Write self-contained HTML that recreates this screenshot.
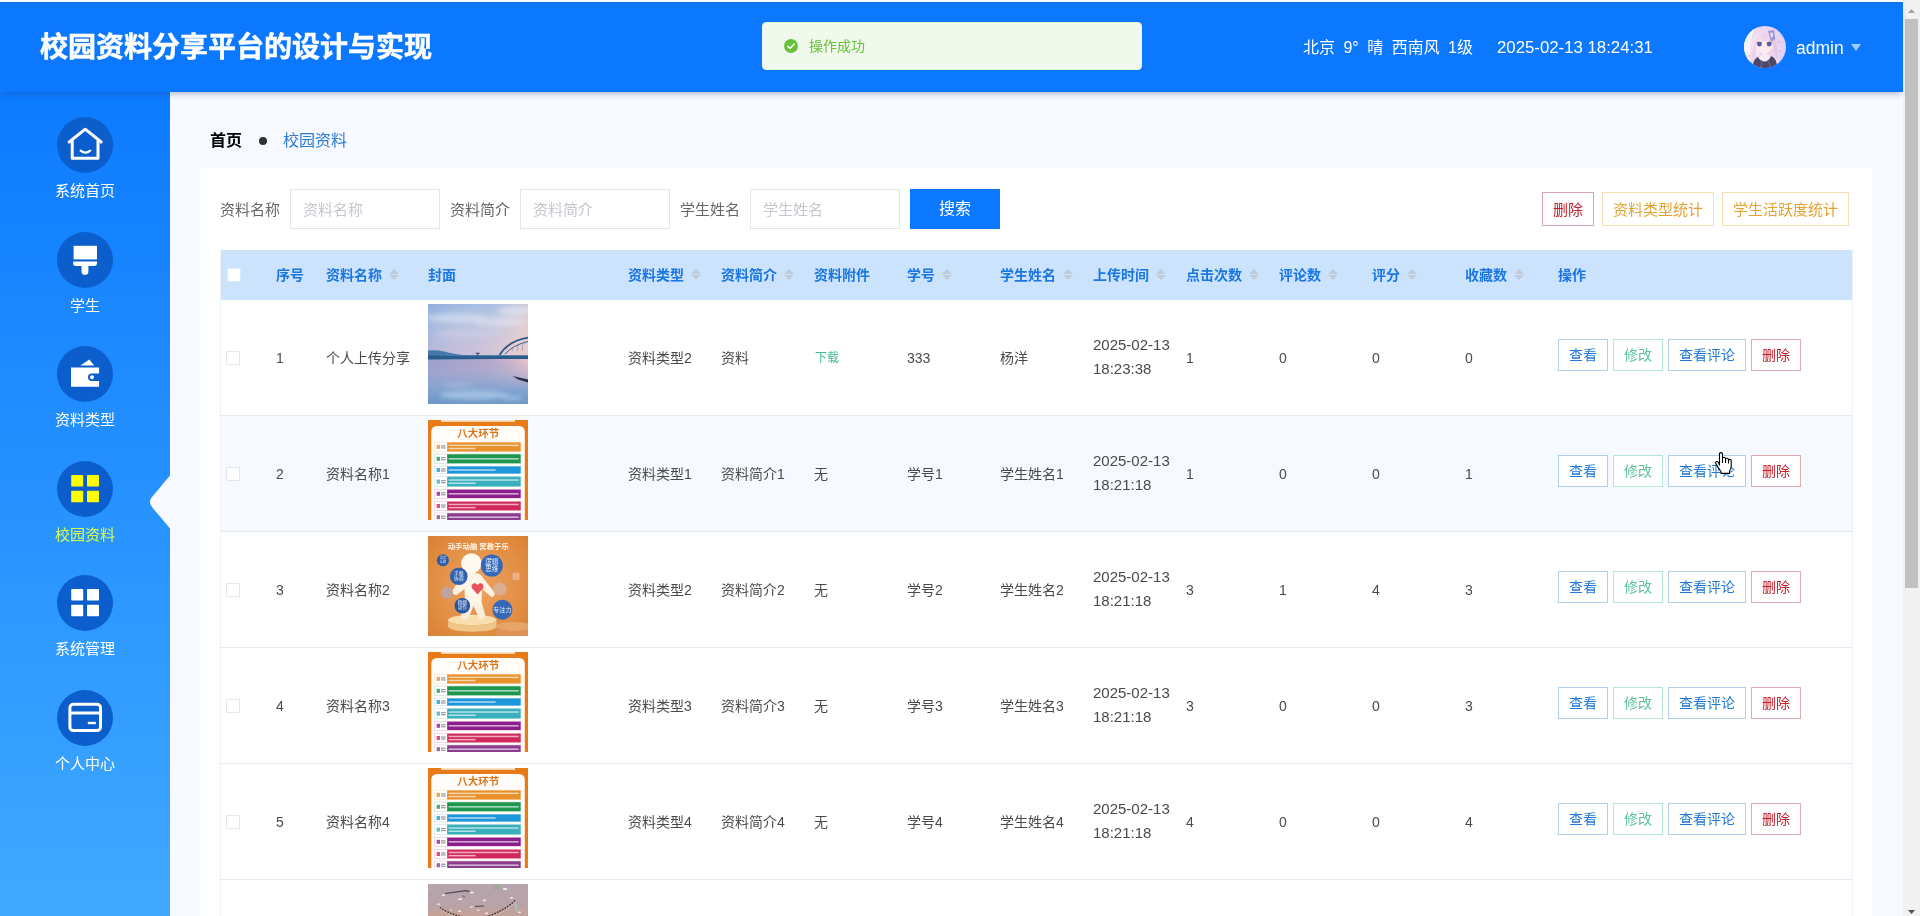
<!DOCTYPE html>
<html lang="zh-CN">
<head>
<meta charset="utf-8">
<title>校园资料分享平台的设计与实现</title>
<style>
*{box-sizing:border-box;margin:0;padding:0}
html,body{width:1920px;height:916px;overflow:hidden;background:#fff}
body{position:relative;opacity:.999;font-family:"Liberation Sans","Noto Sans CJK SC",sans-serif;font-size:14px;color:#4a4a4a}
.abs{position:absolute}
/* header */
#hdr{left:0;top:2px;width:1903px;height:90px;background:#0b78ff;box-shadow:0 4px 6px -2px rgba(40,60,120,.32);z-index:5}
#hdr:before{content:"";position:absolute;left:0;top:0;width:100%;height:1px;background:#1b6fdb}
#title{left:40px;top:26px;font-size:28px;font-weight:bold;-webkit-text-stroke:0.5px #fff;color:#fff;line-height:40px;letter-spacing:0;white-space:nowrap}
#toast{left:762px;top:20px;width:380px;height:48px;background:#f0f9eb;border:1px solid #e1f3d8;border-radius:4px}
#toast svg{position:absolute;left:21px;top:16px}
#toast span{position:absolute;left:46px;top:14px;font-size:14px;line-height:18px;color:#67c23a}
#wx{left:1303px;top:34px;font-size:16px;line-height:24px;color:#fff;white-space:nowrap;word-spacing:4px}
#tm{left:1497px;top:34px;font-size:16.8px;line-height:24px;color:#fff;white-space:nowrap}
#ava{left:1744px;top:24px;width:42px;height:42px;border-radius:50%;overflow:hidden}
#adm{left:1796px;top:33.5px;font-size:17.5px;line-height:24px;color:#fff}
#caret{left:1851px;top:42px;width:0;height:0;border-left:5px solid transparent;border-right:5px solid transparent;border-top:7px solid #9dccff}
/* sidebar */
#side{left:0;top:92px;width:170px;height:824px;background:linear-gradient(180deg,#0d7bff 0%,#2490ff 45%,#40a9ff 100%)}
.mi{position:absolute;left:0;width:170px;height:114px;text-align:center}
.mi .c{position:absolute;left:57px;top:0;width:56px;height:56px;border-radius:50%;background:#0b5ecb}
.mi .c svg{position:absolute;left:0;top:0}
.mi .t{position:absolute;left:0;width:170px;top:63px;font-size:15px;line-height:22px;color:#fff}
.mi.on .t{color:#dcff55}
#notch{left:148px;top:382px}
/* scrollbar */
#sb{left:1903px;top:0;width:17px;height:916px;background:#f1f1f1}
#sb .th{position:absolute;left:2px;top:19px;width:13px;height:569px;background:#c1c1c1}
/* main */
#main{left:170px;top:92px;width:1733px;height:824px;background:#f6f9ff}
#bc{left:210px;top:129px;font-size:16px;line-height:24px;white-space:nowrap}
#bc b{color:#000}
#bc .d{display:inline-block;width:8px;height:8px;border-radius:50%;background:#303133;margin:0 16px 1px 17px;vertical-align:middle}
#bc .l{color:#2b7bd3}
#card{left:200px;top:168px;width:1672px;height:748px;background:#fff}
.lab{position:absolute;top:190px;height:40px;line-height:40px;font-size:15px;color:#666;white-space:nowrap}
.inp{position:absolute;top:189px;width:150px;height:40px;border:1px solid #e4e6ec;background:#fff;line-height:40px;padding-left:12px;font-size:15px;color:#c4c7ce;white-space:nowrap}
#sbtn{left:910px;top:189px;width:90px;height:40px;background:#0b78ff;color:#fff;font-size:16px;line-height:40px;text-align:center}
.tb{position:absolute;top:192px;height:34px;line-height:33.5px;border:1px solid;font-size:15px;padding:0 10px;background:#fff;white-space:nowrap}
.tb.r{color:#c4202a;border-color:#dba3ab}
.tb.o{color:#e3a233;border-color:#f7ddb1}
/* table */
#th{left:220px;top:250px;width:1632px;height:50px;background:#cce3fd}
#th span{position:absolute;top:0;line-height:50px;font-size:14px;font-weight:bold;color:#1a76e3;white-space:nowrap}
.so{position:absolute;top:18px;width:10px;height:14px}
.so:before,.so:after{content:"";position:absolute;left:0;border-left:5px solid transparent;border-right:5px solid transparent}
.so:before{top:0.5px;border-bottom:5px solid #c0cada}
.so:after{top:6.5px;border-top:5px solid #c0cada}
.cb{position:absolute;width:14px;height:14px;border:1px solid #e3e6ec;background:#fff;border-radius:1px}
.row{position:absolute;left:220px;width:1632px;height:116px;border-bottom:1px solid #e4e8f3;background:#fff}
.row.alt{background:#f6f9ff}
.row .x{position:absolute;top:47px;line-height:22px;font-size:14px;color:#4a4a4a;white-space:nowrap}
.row .x2{position:absolute;top:33px;line-height:24px;font-size:15px;color:#4a4a4a;white-space:nowrap}
.row .im{position:absolute;left:208px;top:4px;width:100px;height:100px;overflow:hidden}
.row .g{color:#3fbf8f}
.bt{position:absolute;top:39px;height:32px;line-height:30px;border:1px solid;font-size:14px;padding:0 10px;background:#fff;white-space:nowrap}
.bt.b{color:#1f78d8;border-color:#b0cfee}
.bt.g{color:#5dc39b;border-color:#b7e6d3}
.bt.r{color:#c4202a;border-color:#e2aab1}
#tbl-l{left:220px;top:250px;width:1px;height:666px;background:#eef1f8}
#tbl-r{left:1852px;top:250px;width:1px;height:666px;background:#eef1f8}
</style>
</head>
<body>
<div id="main" class="abs"></div>
<div id="card" class="abs"></div>

<!-- HEADER -->
<div id="hdr" class="abs">
  <div id="title" class="abs">校园资料分享平台的设计与实现</div>
  <div id="toast" class="abs">
    <svg width="14" height="14" viewBox="0 0 14 14"><circle cx="7" cy="7" r="7" fill="#67c23a"/><path d="M3.8 7.2 L6.1 9.4 L10.3 5.1" fill="none" stroke="#fff" stroke-width="1.5" stroke-linecap="round" stroke-linejoin="round"/></svg>
    <span>操作成功</span>
  </div>
  <div id="wx" class="abs">北京 9° 晴 西南风 1级</div>
  <div id="tm" class="abs">2025-02-13 18:24:31</div>
  <div id="ava" class="abs"><svg width="42" height="42" viewBox="0 0 42 42"><defs><radialGradient id="ag" cx=".4" cy=".45" r=".65"><stop offset="0" stop-color="#fbeaf3"/><stop offset=".55" stop-color="#ecd8f2"/><stop offset="1" stop-color="#d6d2f4"/></radialGradient><filter id="ab" x="-20%" y="-20%" width="140%" height="140%"><feGaussianBlur stdDeviation=".7"/></filter></defs><rect width="42" height="42" fill="url(#ag)"/><g filter="url(#ab)"><path d="M0 0 H12 Q4 14 7 42 H0 Z" fill="#f6f3fb"/><path d="M9 42 Q5 16 19 7 Q34 4 36 24 Q37 34 34 42 Z" fill="#efd3ec"/><path d="M12 30 Q10 18 18 10 Q14 22 16 32 Z" fill="#f8e6f4"/><path d="M30 12 Q35 22 33 34 Q30 24 28 14 Z" fill="#e2c6ea"/><path d="M24 5 l6 -1 l1.4 9 l-4.4 3 z" fill="#9d95d6"/><path d="M26 7 l2.6 -.4 l.6 4 l-2 1.2 z" fill="#e6e2f6"/><path d="M12.5 17 Q20 13 28.5 17 Q29.5 25 20.5 28.5 Q12 25 12.500 17Z" fill="#fdebee"/><ellipse cx="15.4" cy="18.6" rx="2.3" ry="2" fill="#5c5ab4"/><ellipse cx="25.2" cy="18.6" rx="2.3" ry="2" fill="#5c5ab4"/><path d="M12.8 17 q2.6 -1.6 5.2 0 M22.6 17 q2.6 -1.6 5.2 0" stroke="#3c3460" stroke-width=".9" fill="none"/><path d="M8 42 Q10 31 16 30 Q21 34 27 30 Q33 32 33 42 Z" fill="#4c4668"/><path d="M14 31 Q20 25.500 27 30.500 Q24 36 20 35.500 Q16 35 14 31Z" fill="#f3ecf3"/><path d="M17 34 q1.500 4 0 8 M24 34 q1 4 3 8" stroke="#6a6288" stroke-width="1.200" fill="none"/><circle cx="35" cy="16" r="1.300" fill="#e9b5d8"/><circle cx="36.500" cy="25" r="1.100" fill="#e9b5d8"/><circle cx="5" cy="30" r="1.100" fill="#d8c8ee"/></g></svg></div>
  <div id="adm" class="abs">admin</div>
  <div id="caret" class="abs"></div>
</div>

<!-- SIDEBAR -->
<div id="side" class="abs"><div class="mi" style="top:25.0px"><div class="c"><svg width="56" height="56" viewBox="0 0 56 56"><path d="M12.2 25 L28.2 12.2 L44.2 25" fill="none" stroke="#ffffff" stroke-width="3" stroke-linejoin="round" stroke-linecap="round"/><path d="M15.2 23.5 V41.2 H41 V23.5" fill="none" stroke="#ffffff" stroke-width="3" stroke-linejoin="round"/><path d="M23.6 33.6 q4.8 4.2 9.6 0" fill="none" stroke="#ffffff" stroke-width="2.2" stroke-linecap="round"/></svg></div><div class="t">系统首页</div></div>
<div class="mi" style="top:139.5px"><div class="c"><svg width="56" height="56" viewBox="0 0 56 56"><path d="M16.6 13.8 h23.4 v13.6 h-23.4 z" fill="#ffffff"/><path d="M16.6 29.4 h23.4 v1.6 q0 3 -3 3 h-5.6 v5.4 a3.45 3.45 0 0 1 -6.9 0 v-5.4 h-5.5 q-3 0 -3 -3 z" fill="#ffffff"/></svg></div><div class="t">学生</div></div>
<div class="mi" style="top:254.0px"><div class="c"><svg width="56" height="56" viewBox="0 0 56 56"><path d="M23.4 19.6 L32.3 13.4 L37.2 19.6 Z" fill="#ffffff"/><path d="M14 21.4 h28.1 v6.2 h-7.4 a3.7 3.7 0 0 0 0 7.4 h7.4 v5.8 h-28.1 z" fill="#ffffff"/><circle cx="35" cy="31.3" r="2" fill="#ffffff"/></svg></div><div class="t">资料类型</div></div>
<div class="mi on" style="top:368.5px"><div class="c"><svg width="56" height="56" viewBox="0 0 56 56"><rect x="14.2" y="14" width="12" height="11.5" rx="0.8" fill="#ffff00"/><rect x="30" y="14" width="12" height="11.5" rx="0.8" fill="#ffff00"/><rect x="14.2" y="29.8" width="12" height="11.5" rx="0.8" fill="#ffff00"/><rect x="30" y="29.8" width="12" height="11.5" rx="0.8" fill="#ffff00"/></svg></div><div class="t">校园资料</div></div>
<div class="mi" style="top:483.0px"><div class="c"><svg width="56" height="56" viewBox="0 0 56 56"><rect x="14.2" y="14" width="12" height="11.5" rx="0.8" fill="#ffffff"/><rect x="30" y="14" width="12" height="11.5" rx="0.8" fill="#ffffff"/><rect x="14.2" y="29.8" width="12" height="11.5" rx="0.8" fill="#ffffff"/><rect x="30" y="29.8" width="12" height="11.5" rx="0.8" fill="#ffffff"/></svg></div><div class="t">系统管理</div></div>
<div class="mi" style="top:597.5px"><div class="c"><svg width="56" height="56" viewBox="0 0 56 56"><rect x="12.9" y="14.3" width="30.6" height="26.3" rx="3.5" fill="none" stroke="#ffffff" stroke-width="3"/><path d="M12.9 23 h30.6" stroke="#ffffff" stroke-width="3"/><path d="M30.8 33 h8" stroke="#ffffff" stroke-width="2.4"/></svg></div><div class="t">个人中心</div></div>
<svg id="notch" class="abs" width="22" height="56" viewBox="0 0 22 56"><path d="M22 1.5 L9.5 16.5 C5.5 21 2 24.5 2 28 C2 31.5 5.5 35 9.5 39.5 L22 54.5 Z" fill="#f8faff"/></svg></div>

<!-- BREADCRUMB -->
<div id="bc" class="abs"><b>首页</b><span class="d"></span><span class="l">校园资料</span></div>

<!-- SEARCH -->
<div class="lab" style="left:220px">资料名称</div><div class="inp" style="left:290px">资料名称</div>
<div class="lab" style="left:450px">资料简介</div><div class="inp" style="left:520px">资料简介</div>
<div class="lab" style="left:680px">学生姓名</div><div class="inp" style="left:750px">学生姓名</div>
<div id="sbtn" class="abs">搜索</div>
<div class="tb r" style="left:1542px">删除</div>
<div class="tb o" style="left:1602px">资料类型统计</div>
<div class="tb o" style="left:1722px">学生活跃度统计</div>

<!-- TABLE -->
<div id="th" class="abs"><div class="cb" style="left:7px;top:18px;border-color:#deebfc"></div>
<span style="left:56px">序号</span>
<span style="left:106px">资料名称</span>
<i class="so" style="left:169px"></i>
<span style="left:208px">封面</span>
<span style="left:408px">资料类型</span>
<i class="so" style="left:471px"></i>
<span style="left:501px">资料简介</span>
<i class="so" style="left:564px"></i>
<span style="left:594px">资料附件</span>
<span style="left:687px">学号</span>
<i class="so" style="left:722px"></i>
<span style="left:780px">学生姓名</span>
<i class="so" style="left:843px"></i>
<span style="left:873px">上传时间</span>
<i class="so" style="left:936px"></i>
<span style="left:966px">点击次数</span>
<i class="so" style="left:1029px"></i>
<span style="left:1059px">评论数</span>
<i class="so" style="left:1108px"></i>
<span style="left:1152px">评分</span>
<i class="so" style="left:1187px"></i>
<span style="left:1245px">收藏数</span>
<i class="so" style="left:1294px"></i>
<span style="left:1338px">操作</span>
</div>
<div class="row" style="top:300px"><div class="cb" style="left:6px;top:51px"></div><div class="x" style="left:56px">1</div><div class="x" style="left:106px">个人上传分享</div><div class="im"><svg width="100" height="100" viewBox="0 0 100 100"><defs><linearGradient id="sky0" x1="0" y1="0" x2="0" y2="1"><stop offset="0" stop-color="#98b8e2"/><stop offset=".3" stop-color="#b4c4e2"/><stop offset=".7" stop-color="#c0bcda"/><stop offset="1" stop-color="#c6b6d2"/></linearGradient><linearGradient id="skx0" x1="0" y1="0" x2="1" y2="0.25"><stop offset="0" stop-color="#86a8da" stop-opacity=".55"/><stop offset=".55" stop-color="#cfcfe6" stop-opacity=".25"/><stop offset="1" stop-color="#f0d2cc" stop-opacity=".75"/></linearGradient><linearGradient id="wat0" x1="0" y1="0" x2="0" y2="1"><stop offset="0" stop-color="#a9a2cc"/><stop offset=".3" stop-color="#a4a8d0"/><stop offset=".65" stop-color="#86a4d0"/><stop offset="1" stop-color="#6c98c8"/></linearGradient><linearGradient id="wax0" x1="0" y1="0" x2="1" y2="0"><stop offset="0" stop-color="#8a9cd0" stop-opacity=".5"/><stop offset=".55" stop-color="#c8b0cc" stop-opacity=".3"/><stop offset="1" stop-color="#f0c8c8" stop-opacity=".95"/></linearGradient><linearGradient id="wfade0" x1="0" y1="0" x2="0" y2="1"><stop offset="0" stop-color="#fff" stop-opacity="1"/><stop offset="1" stop-color="#fff" stop-opacity="0"/></linearGradient><filter id="bl0" x="-20%" y="-50%" width="140%" height="200%"><feGaussianBlur stdDeviation="2.2"/></filter><mask id="wm0"><rect y="54" width="100" height="32" fill="url(#wfade0)"/></mask></defs><rect width="100" height="55" fill="url(#sky0)"/><rect width="100" height="55" fill="url(#skx0)"/><g filter="url(#bl0)"><ellipse cx="28" cy="14" rx="30" ry="4.5" fill="#dfe7f4" opacity=".55"/><ellipse cx="72" cy="18" rx="26" ry="5" fill="#e6e6f2" opacity=".45"/><ellipse cx="86" cy="7" rx="16" ry="5" fill="#e8eef8" opacity=".5"/><ellipse cx="40" cy="30" rx="34" ry="4" fill="#d2d0e6" opacity=".5"/></g><rect y="54" width="100" height="46" fill="url(#wat0)"/><rect y="54" width="100" height="46" fill="url(#wax0)" mask="url(#wm0)"/><path d="M0 46.5 Q8 45.5 16 47.5 T34 51 L100 51.5 V55 H0 Z" fill="#4578ac"/><path d="M0 51.2 Q30 52.6 60 52 L100 51.6 V55 H70 L0 55.6 Z" fill="#2a5c8c"/><path d="M71.5 51 Q80 37 100 33.6" fill="none" stroke="#2c5484" stroke-width="1.7"/><path d="M77 50 Q85 41 100 37.5" fill="none" stroke="#3a6090" stroke-width="1"/><path d="M84 47 L85 44 M89 47 L90 41 M94 47 L95 39" stroke="#5a7ca8" stroke-width=".5"/><rect x="47.8" y="48.8" width="3.8" height="1" fill="#27406a"/><rect x="49.3" y="48.8" width="0.9" height="3.2" fill="#27406a"/><path d="M84.5 72 L100 75.5 V78.5 L90 75.5 Z" fill="#2a3048"/><g filter="url(#bl0)"><ellipse cx="46" cy="91" rx="34" ry="4.5" fill="#b4d0ec" opacity=".65"/><ellipse cx="30" cy="81" rx="16" ry="2.5" fill="#b8cdea" opacity=".35"/><ellipse cx="84" cy="94" rx="10" ry="2.5" fill="#b4d0ec" opacity=".55"/></g></svg></div><div class="x" style="left:408px">资料类型2</div><div class="x" style="left:501px">资料</div><div class="x g" style="left:594px;font-size:12px;margin-left:1px">下载</div><div class="x" style="left:687px">333</div><div class="x" style="left:780px">杨洋</div><div class="x2" style="left:873px">2025-02-13<br>18:23:38</div><div class="x" style="left:966px">1</div><div class="x" style="left:1059px">0</div><div class="x" style="left:1152px">0</div><div class="x" style="left:1245px">0</div><div class="bt b" style="left:1338px">查看</div><div class="bt g" style="left:1393px">修改</div><div class="bt b" style="left:1448px">查看评论</div><div class="bt r" style="left:1531px">删除</div></div>
<div class="row alt" style="top:416px"><div class="cb" style="left:6px;top:51px"></div><div class="x" style="left:56px">2</div><div class="x" style="left:106px">资料名称1</div><div class="im"><svg width="100" height="100" viewBox="0 0 100 100"><rect width="100" height="100" fill="#e87a17"/><path d="M3.3 100 V11.5 a5.5 5.5 0 0 1 5.5 -5.5 H91.3 a5.5 5.5 0 0 1 5.5 5.5 V100 Z" fill="#fffcf9"/><rect x="13" y="0" width="74" height="1.8" fill="#fbe3c8"/><text x="50.3" y="17.3" text-anchor="middle" font-size="10.5" font-weight="bold" fill="#d9761e" font-family="Liberation Sans,Noto Sans CJK SC,sans-serif">八大环节</text><rect x="6" y="21.9" width="87.2" height="10.1" fill="#e8902a" opacity=".28"/><rect x="6.6" y="22.5" width="12.6" height="8.9" fill="#fff"/><rect x="19.2" y="22.5" width="73.4" height="8.9" fill="#e8902a"/><rect x="8.6" y="24.9" width="3.4" height="4" fill="#e8902a" opacity=".8"/><rect x="13" y="25.3" width="4.6" height="1.2" fill="#555" opacity=".6"/><rect x="13" y="27.3" width="4.6" height="1.2" fill="#555" opacity=".6"/><rect x="20.6" y="24.6" width="70" height="1.5" fill="#fff" opacity=".62"/><rect x="20.6" y="27.8" width="27" height="1.5" fill="#fff" opacity=".62"/><rect x="6" y="33.7" width="87.2" height="10.1" fill="#1e9650" opacity=".28"/><rect x="6.6" y="34.3" width="12.6" height="8.9" fill="#fff"/><rect x="19.2" y="34.3" width="73.4" height="8.9" fill="#1e9650"/><rect x="8.6" y="36.8" width="3.4" height="4" fill="#1e9650" opacity=".8"/><rect x="13" y="37.1" width="4.6" height="1.2" fill="#555" opacity=".6"/><rect x="13" y="39.1" width="4.6" height="1.2" fill="#555" opacity=".6"/><rect x="20.6" y="38.0" width="70" height="1.6" fill="#fff" opacity=".62"/><rect x="6" y="45.9" width="87.2" height="8.2" fill="#1e96dc" opacity=".28"/><rect x="6.6" y="46.5" width="12.6" height="7.0" fill="#fff"/><rect x="19.2" y="46.5" width="73.4" height="7.0" fill="#1e96dc"/><rect x="8.6" y="48.0" width="3.4" height="4" fill="#1e96dc" opacity=".8"/><rect x="13" y="48.4" width="4.6" height="1.2" fill="#555" opacity=".6"/><rect x="13" y="50.4" width="4.6" height="1.2" fill="#555" opacity=".6"/><rect x="20.6" y="49.2" width="47" height="1.6" fill="#fff" opacity=".62"/><rect x="6" y="56.1" width="87.2" height="10.9" fill="#3ab0bc" opacity=".28"/><rect x="6.6" y="56.7" width="12.6" height="9.7" fill="#fff"/><rect x="19.2" y="56.7" width="73.4" height="9.7" fill="#3ab0bc"/><rect x="8.6" y="59.6" width="3.4" height="4" fill="#3ab0bc" opacity=".8"/><rect x="13" y="60.0" width="4.6" height="1.2" fill="#555" opacity=".6"/><rect x="13" y="62.0" width="4.6" height="1.2" fill="#555" opacity=".6"/><rect x="20.6" y="59.3" width="70" height="1.5" fill="#fff" opacity=".62"/><rect x="20.6" y="62.5" width="27" height="1.5" fill="#fff" opacity=".62"/><rect x="6" y="69.1" width="87.2" height="9.5" fill="#8c1e8c" opacity=".28"/><rect x="6.6" y="69.7" width="12.6" height="8.3" fill="#fff"/><rect x="19.2" y="69.7" width="73.4" height="8.3" fill="#8c1e8c"/><rect x="8.6" y="71.8" width="3.4" height="4" fill="#8c1e8c" opacity=".8"/><rect x="13" y="72.2" width="4.6" height="1.2" fill="#555" opacity=".6"/><rect x="13" y="74.2" width="4.6" height="1.2" fill="#555" opacity=".6"/><rect x="20.6" y="73.0" width="70" height="1.6" fill="#fff" opacity=".62"/><rect x="6" y="81.1" width="87.2" height="9.8" fill="#d2285f" opacity=".28"/><rect x="6.6" y="81.7" width="12.6" height="8.6" fill="#fff"/><rect x="19.2" y="81.7" width="73.4" height="8.6" fill="#d2285f"/><rect x="8.6" y="84.0" width="3.4" height="4" fill="#d2285f" opacity=".8"/><rect x="13" y="84.4" width="4.6" height="1.2" fill="#555" opacity=".6"/><rect x="13" y="86.4" width="4.6" height="1.2" fill="#555" opacity=".6"/><rect x="20.6" y="83.7" width="70" height="1.5" fill="#fff" opacity=".62"/><rect x="20.6" y="86.9" width="27" height="1.5" fill="#fff" opacity=".62"/><rect x="6" y="92.7" width="87.2" height="8.9" fill="#8c3c8c" opacity=".28"/><rect x="6.6" y="93.3" width="12.6" height="7.7" fill="#fff"/><rect x="19.2" y="93.3" width="73.4" height="7.7" fill="#8c3c8c"/><rect x="8.6" y="95.2" width="3.4" height="4" fill="#8c3c8c" opacity=".8"/><rect x="13" y="95.6" width="4.6" height="1.2" fill="#555" opacity=".6"/><rect x="13" y="97.6" width="4.6" height="1.2" fill="#555" opacity=".6"/><rect x="20.6" y="96.4" width="70" height="1.6" fill="#fff" opacity=".62"/></svg></div><div class="x" style="left:408px">资料类型1</div><div class="x" style="left:501px">资料简介1</div><div class="x" style="left:594px">无</div><div class="x" style="left:687px">学号1</div><div class="x" style="left:780px">学生姓名1</div><div class="x2" style="left:873px">2025-02-13<br>18:21:18</div><div class="x" style="left:966px">1</div><div class="x" style="left:1059px">0</div><div class="x" style="left:1152px">0</div><div class="x" style="left:1245px">1</div><div class="bt b" style="left:1338px">查看</div><div class="bt g" style="left:1393px">修改</div><div class="bt b" style="left:1448px">查看评论</div><div class="bt r" style="left:1531px">删除</div></div>
<div class="row" style="top:532px"><div class="cb" style="left:6px;top:51px"></div><div class="x" style="left:56px">3</div><div class="x" style="left:106px">资料名称2</div><div class="im"><svg width="100" height="100" viewBox="0 0 100 100"><defs><radialGradient id="tbg2" cx=".5" cy=".5" r=".72"><stop offset="0" stop-color="#eda365"/><stop offset=".6" stop-color="#e38f45"/><stop offset="1" stop-color="#d98032"/></radialGradient><radialGradient id="tfig2" cx=".5" cy=".35" r=".7"><stop offset="0" stop-color="#fffaf0"/><stop offset="1" stop-color="#f9ead2"/></radialGradient></defs><rect width="100" height="100" fill="url(#tbg2)"/><text x="50.3" y="13.2" text-anchor="middle" font-size="7.4" font-weight="bold" fill="#fff6ea" font-family="Liberation Sans,Noto Sans CJK SC,sans-serif">动手动脑 寓教于乐</text><ellipse cx="86" cy="90.5" rx="18" ry="4.5" fill="#e6a468"/><path d="M68 90.5 v10 h36 v-10 a18 4.5 0 0 1 -36 0z" fill="#dc9354"/><ellipse cx="44.3" cy="84" rx="24.2" ry="5.2" fill="#f9dfae"/><path d="M20.1 84 v6.5 a24.2 5.2 0 0 0 48.4 0 v-6.5 a24.2 5.2 0 0 1 -48.4 0z" fill="#efc68a"/><path d="M34.5 38 Q43 35 52 38 L66.5 56.5 Q67.5 60.5 63.5 61 L54 53 L53.5 66 L57.5 80 Q57 84 51.5 83 L45.5 70 L40 83 Q34 85 32.5 81 L37 66 L36.5 53 L28.5 59 Q24 58.5 24.5 54.5 Z" fill="url(#tfig2)"/><circle cx="43.4" cy="27.4" r="10.2" fill="#fffaf0"/><path d="M49.6 49.2 c-2.2 -4.2 -7.8 -1.2 -5.4 3.2 l5.4 6.2 5.4 -6.2 c2.4 -4.4 -3.2 -7.4 -5.4 -3.2z" fill="#e8525f"/><circle cx="19" cy="56.7" r="6" fill="#b9a4ae" opacity=".9"/><circle cx="72" cy="53.2" r="6.5" fill="#dcae90"/><rect x="84.5" y="36.5" width="7" height="7.5" rx="1.5" fill="#ecb285"/><circle cx="14.9" cy="24.3" r="6" fill="#2d5aa4"/><circle cx="30.8" cy="40.2" r="8.8" fill="#3162ae"/><circle cx="63.8" cy="29.6" r="11" fill="#3568b6"/><circle cx="34.3" cy="69.7" r="7.8" fill="#2b57a2"/><circle cx="74.4" cy="73.8" r="10" fill="#3568b6"/><text x="63.8" y="27.799999999999997" text-anchor="middle" font-size="6.6" fill="#e8eefa" font-family="Liberation Sans,Noto Sans CJK SC,sans-serif">逻辑</text><text x="63.8" y="34.8" text-anchor="middle" font-size="6.6" fill="#e8eefa" font-family="Liberation Sans,Noto Sans CJK SC,sans-serif">思维</text><text x="30.8" y="39.0" text-anchor="middle" font-size="4.8" fill="#e8eefa" font-family="Liberation Sans,Noto Sans CJK SC,sans-serif">手眼</text><text x="30.8" y="44.199999999999996" text-anchor="middle" font-size="4.8" fill="#e8eefa" font-family="Liberation Sans,Noto Sans CJK SC,sans-serif">协调</text><text x="34.3" y="68.4" text-anchor="middle" font-size="4.6" fill="#e8eefa" font-family="Liberation Sans,Noto Sans CJK SC,sans-serif">精细</text><text x="34.3" y="73.39999999999999" text-anchor="middle" font-size="4.6" fill="#e8eefa" font-family="Liberation Sans,Noto Sans CJK SC,sans-serif">动作</text><text x="14.9" y="23.2" text-anchor="middle" font-size="3.2" fill="#e8eefa" font-family="Liberation Sans,Noto Sans CJK SC,sans-serif">语言</text><text x="14.9" y="26.8" text-anchor="middle" font-size="3.2" fill="#e8eefa" font-family="Liberation Sans,Noto Sans CJK SC,sans-serif">认知</text><text x="74.4" y="76.4" text-anchor="middle" font-size="6.2" fill="#e8eefa" font-family="Liberation Sans,Noto Sans CJK SC,sans-serif">专注力</text></svg></div><div class="x" style="left:408px">资料类型2</div><div class="x" style="left:501px">资料简介2</div><div class="x" style="left:594px">无</div><div class="x" style="left:687px">学号2</div><div class="x" style="left:780px">学生姓名2</div><div class="x2" style="left:873px">2025-02-13<br>18:21:18</div><div class="x" style="left:966px">3</div><div class="x" style="left:1059px">1</div><div class="x" style="left:1152px">4</div><div class="x" style="left:1245px">3</div><div class="bt b" style="left:1338px">查看</div><div class="bt g" style="left:1393px">修改</div><div class="bt b" style="left:1448px">查看评论</div><div class="bt r" style="left:1531px">删除</div></div>
<div class="row" style="top:648px"><div class="cb" style="left:6px;top:51px"></div><div class="x" style="left:56px">4</div><div class="x" style="left:106px">资料名称3</div><div class="im"><svg width="100" height="100" viewBox="0 0 100 100"><rect width="100" height="100" fill="#e87a17"/><path d="M3.3 100 V11.5 a5.5 5.5 0 0 1 5.5 -5.5 H91.3 a5.5 5.5 0 0 1 5.5 5.5 V100 Z" fill="#fffcf9"/><rect x="13" y="0" width="74" height="1.8" fill="#fbe3c8"/><text x="50.3" y="17.3" text-anchor="middle" font-size="10.5" font-weight="bold" fill="#d9761e" font-family="Liberation Sans,Noto Sans CJK SC,sans-serif">八大环节</text><rect x="6" y="21.9" width="87.2" height="10.1" fill="#e8902a" opacity=".28"/><rect x="6.6" y="22.5" width="12.6" height="8.9" fill="#fff"/><rect x="19.2" y="22.5" width="73.4" height="8.9" fill="#e8902a"/><rect x="8.6" y="24.9" width="3.4" height="4" fill="#e8902a" opacity=".8"/><rect x="13" y="25.3" width="4.6" height="1.2" fill="#555" opacity=".6"/><rect x="13" y="27.3" width="4.6" height="1.2" fill="#555" opacity=".6"/><rect x="20.6" y="24.6" width="70" height="1.5" fill="#fff" opacity=".62"/><rect x="20.6" y="27.8" width="27" height="1.5" fill="#fff" opacity=".62"/><rect x="6" y="33.7" width="87.2" height="10.1" fill="#1e9650" opacity=".28"/><rect x="6.6" y="34.3" width="12.6" height="8.9" fill="#fff"/><rect x="19.2" y="34.3" width="73.4" height="8.9" fill="#1e9650"/><rect x="8.6" y="36.8" width="3.4" height="4" fill="#1e9650" opacity=".8"/><rect x="13" y="37.1" width="4.6" height="1.2" fill="#555" opacity=".6"/><rect x="13" y="39.1" width="4.6" height="1.2" fill="#555" opacity=".6"/><rect x="20.6" y="38.0" width="70" height="1.6" fill="#fff" opacity=".62"/><rect x="6" y="45.9" width="87.2" height="8.2" fill="#1e96dc" opacity=".28"/><rect x="6.6" y="46.5" width="12.6" height="7.0" fill="#fff"/><rect x="19.2" y="46.5" width="73.4" height="7.0" fill="#1e96dc"/><rect x="8.6" y="48.0" width="3.4" height="4" fill="#1e96dc" opacity=".8"/><rect x="13" y="48.4" width="4.6" height="1.2" fill="#555" opacity=".6"/><rect x="13" y="50.4" width="4.6" height="1.2" fill="#555" opacity=".6"/><rect x="20.6" y="49.2" width="47" height="1.6" fill="#fff" opacity=".62"/><rect x="6" y="56.1" width="87.2" height="10.9" fill="#3ab0bc" opacity=".28"/><rect x="6.6" y="56.7" width="12.6" height="9.7" fill="#fff"/><rect x="19.2" y="56.7" width="73.4" height="9.7" fill="#3ab0bc"/><rect x="8.6" y="59.6" width="3.4" height="4" fill="#3ab0bc" opacity=".8"/><rect x="13" y="60.0" width="4.6" height="1.2" fill="#555" opacity=".6"/><rect x="13" y="62.0" width="4.6" height="1.2" fill="#555" opacity=".6"/><rect x="20.6" y="59.3" width="70" height="1.5" fill="#fff" opacity=".62"/><rect x="20.6" y="62.5" width="27" height="1.5" fill="#fff" opacity=".62"/><rect x="6" y="69.1" width="87.2" height="9.5" fill="#8c1e8c" opacity=".28"/><rect x="6.6" y="69.7" width="12.6" height="8.3" fill="#fff"/><rect x="19.2" y="69.7" width="73.4" height="8.3" fill="#8c1e8c"/><rect x="8.6" y="71.8" width="3.4" height="4" fill="#8c1e8c" opacity=".8"/><rect x="13" y="72.2" width="4.6" height="1.2" fill="#555" opacity=".6"/><rect x="13" y="74.2" width="4.6" height="1.2" fill="#555" opacity=".6"/><rect x="20.6" y="73.0" width="70" height="1.6" fill="#fff" opacity=".62"/><rect x="6" y="81.1" width="87.2" height="9.8" fill="#d2285f" opacity=".28"/><rect x="6.6" y="81.7" width="12.6" height="8.6" fill="#fff"/><rect x="19.2" y="81.7" width="73.4" height="8.6" fill="#d2285f"/><rect x="8.6" y="84.0" width="3.4" height="4" fill="#d2285f" opacity=".8"/><rect x="13" y="84.4" width="4.6" height="1.2" fill="#555" opacity=".6"/><rect x="13" y="86.4" width="4.6" height="1.2" fill="#555" opacity=".6"/><rect x="20.6" y="83.7" width="70" height="1.5" fill="#fff" opacity=".62"/><rect x="20.6" y="86.9" width="27" height="1.5" fill="#fff" opacity=".62"/><rect x="6" y="92.7" width="87.2" height="8.9" fill="#8c3c8c" opacity=".28"/><rect x="6.6" y="93.3" width="12.6" height="7.7" fill="#fff"/><rect x="19.2" y="93.3" width="73.4" height="7.7" fill="#8c3c8c"/><rect x="8.6" y="95.2" width="3.4" height="4" fill="#8c3c8c" opacity=".8"/><rect x="13" y="95.6" width="4.6" height="1.2" fill="#555" opacity=".6"/><rect x="13" y="97.6" width="4.6" height="1.2" fill="#555" opacity=".6"/><rect x="20.6" y="96.4" width="70" height="1.6" fill="#fff" opacity=".62"/></svg></div><div class="x" style="left:408px">资料类型3</div><div class="x" style="left:501px">资料简介3</div><div class="x" style="left:594px">无</div><div class="x" style="left:687px">学号3</div><div class="x" style="left:780px">学生姓名3</div><div class="x2" style="left:873px">2025-02-13<br>18:21:18</div><div class="x" style="left:966px">3</div><div class="x" style="left:1059px">0</div><div class="x" style="left:1152px">0</div><div class="x" style="left:1245px">3</div><div class="bt b" style="left:1338px">查看</div><div class="bt g" style="left:1393px">修改</div><div class="bt b" style="left:1448px">查看评论</div><div class="bt r" style="left:1531px">删除</div></div>
<div class="row" style="top:764px"><div class="cb" style="left:6px;top:51px"></div><div class="x" style="left:56px">5</div><div class="x" style="left:106px">资料名称4</div><div class="im"><svg width="100" height="100" viewBox="0 0 100 100"><rect width="100" height="100" fill="#e87a17"/><path d="M3.3 100 V11.5 a5.5 5.5 0 0 1 5.5 -5.5 H91.3 a5.5 5.5 0 0 1 5.5 5.5 V100 Z" fill="#fffcf9"/><rect x="13" y="0" width="74" height="1.8" fill="#fbe3c8"/><text x="50.3" y="17.3" text-anchor="middle" font-size="10.5" font-weight="bold" fill="#d9761e" font-family="Liberation Sans,Noto Sans CJK SC,sans-serif">八大环节</text><rect x="6" y="21.9" width="87.2" height="10.1" fill="#e8902a" opacity=".28"/><rect x="6.6" y="22.5" width="12.6" height="8.9" fill="#fff"/><rect x="19.2" y="22.5" width="73.4" height="8.9" fill="#e8902a"/><rect x="8.6" y="24.9" width="3.4" height="4" fill="#e8902a" opacity=".8"/><rect x="13" y="25.3" width="4.6" height="1.2" fill="#555" opacity=".6"/><rect x="13" y="27.3" width="4.6" height="1.2" fill="#555" opacity=".6"/><rect x="20.6" y="24.6" width="70" height="1.5" fill="#fff" opacity=".62"/><rect x="20.6" y="27.8" width="27" height="1.5" fill="#fff" opacity=".62"/><rect x="6" y="33.7" width="87.2" height="10.1" fill="#1e9650" opacity=".28"/><rect x="6.6" y="34.3" width="12.6" height="8.9" fill="#fff"/><rect x="19.2" y="34.3" width="73.4" height="8.9" fill="#1e9650"/><rect x="8.6" y="36.8" width="3.4" height="4" fill="#1e9650" opacity=".8"/><rect x="13" y="37.1" width="4.6" height="1.2" fill="#555" opacity=".6"/><rect x="13" y="39.1" width="4.6" height="1.2" fill="#555" opacity=".6"/><rect x="20.6" y="38.0" width="70" height="1.6" fill="#fff" opacity=".62"/><rect x="6" y="45.9" width="87.2" height="8.2" fill="#1e96dc" opacity=".28"/><rect x="6.6" y="46.5" width="12.6" height="7.0" fill="#fff"/><rect x="19.2" y="46.5" width="73.4" height="7.0" fill="#1e96dc"/><rect x="8.6" y="48.0" width="3.4" height="4" fill="#1e96dc" opacity=".8"/><rect x="13" y="48.4" width="4.6" height="1.2" fill="#555" opacity=".6"/><rect x="13" y="50.4" width="4.6" height="1.2" fill="#555" opacity=".6"/><rect x="20.6" y="49.2" width="47" height="1.6" fill="#fff" opacity=".62"/><rect x="6" y="56.1" width="87.2" height="10.9" fill="#3ab0bc" opacity=".28"/><rect x="6.6" y="56.7" width="12.6" height="9.7" fill="#fff"/><rect x="19.2" y="56.7" width="73.4" height="9.7" fill="#3ab0bc"/><rect x="8.6" y="59.6" width="3.4" height="4" fill="#3ab0bc" opacity=".8"/><rect x="13" y="60.0" width="4.6" height="1.2" fill="#555" opacity=".6"/><rect x="13" y="62.0" width="4.6" height="1.2" fill="#555" opacity=".6"/><rect x="20.6" y="59.3" width="70" height="1.5" fill="#fff" opacity=".62"/><rect x="20.6" y="62.5" width="27" height="1.5" fill="#fff" opacity=".62"/><rect x="6" y="69.1" width="87.2" height="9.5" fill="#8c1e8c" opacity=".28"/><rect x="6.6" y="69.7" width="12.6" height="8.3" fill="#fff"/><rect x="19.2" y="69.7" width="73.4" height="8.3" fill="#8c1e8c"/><rect x="8.6" y="71.8" width="3.4" height="4" fill="#8c1e8c" opacity=".8"/><rect x="13" y="72.2" width="4.6" height="1.2" fill="#555" opacity=".6"/><rect x="13" y="74.2" width="4.6" height="1.2" fill="#555" opacity=".6"/><rect x="20.6" y="73.0" width="70" height="1.6" fill="#fff" opacity=".62"/><rect x="6" y="81.1" width="87.2" height="9.8" fill="#d2285f" opacity=".28"/><rect x="6.6" y="81.7" width="12.6" height="8.6" fill="#fff"/><rect x="19.2" y="81.7" width="73.4" height="8.6" fill="#d2285f"/><rect x="8.6" y="84.0" width="3.4" height="4" fill="#d2285f" opacity=".8"/><rect x="13" y="84.4" width="4.6" height="1.2" fill="#555" opacity=".6"/><rect x="13" y="86.4" width="4.6" height="1.2" fill="#555" opacity=".6"/><rect x="20.6" y="83.7" width="70" height="1.5" fill="#fff" opacity=".62"/><rect x="20.6" y="86.9" width="27" height="1.5" fill="#fff" opacity=".62"/><rect x="6" y="92.7" width="87.2" height="8.9" fill="#8c3c8c" opacity=".28"/><rect x="6.6" y="93.3" width="12.6" height="7.7" fill="#fff"/><rect x="19.2" y="93.3" width="73.4" height="7.7" fill="#8c3c8c"/><rect x="8.6" y="95.2" width="3.4" height="4" fill="#8c3c8c" opacity=".8"/><rect x="13" y="95.6" width="4.6" height="1.2" fill="#555" opacity=".6"/><rect x="13" y="97.6" width="4.6" height="1.2" fill="#555" opacity=".6"/><rect x="20.6" y="96.4" width="70" height="1.6" fill="#fff" opacity=".62"/></svg></div><div class="x" style="left:408px">资料类型4</div><div class="x" style="left:501px">资料简介4</div><div class="x" style="left:594px">无</div><div class="x" style="left:687px">学号4</div><div class="x" style="left:780px">学生姓名4</div><div class="x2" style="left:873px">2025-02-13<br>18:21:18</div><div class="x" style="left:966px">4</div><div class="x" style="left:1059px">0</div><div class="x" style="left:1152px">0</div><div class="x" style="left:1245px">4</div><div class="bt b" style="left:1338px">查看</div><div class="bt g" style="left:1393px">修改</div><div class="bt b" style="left:1448px">查看评论</div><div class="bt r" style="left:1531px">删除</div></div>
<div class="row" style="top:880px"><div class="im"><svg width="100" height="100" viewBox="0 0 100 100"><defs><linearGradient id="pg5" x1="0" y1="0" x2="0" y2="1"><stop offset="0" stop-color="#b7a4ae"/><stop offset=".22" stop-color="#b9a3a8"/><stop offset=".31" stop-color="#c4a297"/><stop offset=".4" stop-color="#d9a27a"/><stop offset="1" stop-color="#d98f58"/></linearGradient></defs><rect width="100" height="100" fill="url(#pg5)"/><path d="M17 9.5 L38 6.6 L41.5 7.4" stroke="#4f4350" stroke-width="1.1" fill="none"/><path d="M47 22.4 L56 22" stroke="#4f4350" stroke-width="1"/><path d="M34 11.5 l3 1.6" stroke="#5a4a55" stroke-width=".8"/><g fill="#f8f1f2" opacity=".9"><rect x="14" y="10.6" width="3" height="1.5" rx=".5"/><rect x="42" y="7.8" width="3.6" height="1.6" rx=".5"/><rect x="30" y="14.5" width="4" height="1.6" rx=".5"/><rect x="55" y="15.6" width="3" height="1.6" rx=".5"/><rect x="75" y="4" width="4" height="2" rx=".5"/><rect x="82" y="13" width="3" height="1.6" rx=".5"/><rect x="9" y="19.4" width="3" height="1.4" rx=".5"/><rect x="42" y="22.4" width="3" height="1.4" rx=".5"/><rect x="49" y="25.4" width="2.6" height="1.4" rx=".5"/><rect x="30" y="26.6" width="3" height="1.4" rx=".5"/><rect x="22" y="25.4" width="2.4" height="1.2" rx=".5"/><rect x="57" y="28.6" width="3" height="1.4" rx=".5"/><rect x="90" y="27.6" width="3" height="1.4" rx=".5"/></g><path d="M65.5 0 l1.4 5.4 l1.6 -4.6 l1.6 4.6 l1.2 -5.4" stroke="#8fb088" stroke-width="1.2" fill="none" opacity=".8"/><path d="M87.5 19.5 l1.2 7.5" stroke="#9fcfa6" stroke-width="1.8" opacity=".85"/><path d="M2 9 l2 3" stroke="#a4a878" stroke-width="1.6" opacity=".7"/><path d="M12 23.5 Q20 29.5 34 32.5" stroke="#2e2626" stroke-width="1.3" stroke-dasharray="1.6 1.3" fill="none"/><path d="M58 33 Q76 27 87.5 16" stroke="#2e2626" stroke-width="1.3" stroke-dasharray="1.6 1.3" fill="none"/><path d="M12.5 25 Q20 31 33 34" stroke="#f4e8d8" stroke-width=".7" stroke-dasharray="1.2 1.7" fill="none"/><path d="M59 34.4 Q77 28.5 88.5 17.5" stroke="#f4e8d8" stroke-width=".7" stroke-dasharray="1.2 1.7" fill="none"/></svg></div></div>
<div id="tbl-l" class="abs"></div><div id="tbl-r" class="abs"></div>

<svg class="abs" style="left:1715px;top:452px;z-index:9" width="18" height="23" viewBox="0 0 18 23"><path d="M4.5 13 L4.5 2 Q4.5 0.6 6 0.6 Q7.5 0.6 7.5 2 L7.5 7.5 L7.5 6.5 Q7.5 5.3 9 5.3 Q10.5 5.3 10.5 6.5 L10.5 8 L10.5 7.2 Q10.5 6.2 12 6.2 Q13.5 6.2 13.5 7.4 L13.5 9 L13.5 8.4 Q13.5 7.4 14.8 7.4 Q16.2 7.4 16.2 8.8 L16.2 14 Q16.2 17 14.5 19 L14.5 21.4 L6 21.4 L6 19.5 Q4 17 2.6 14.6 L0.8 11.6 Q0.2 10.2 1.4 9.6 Q2.6 9.2 3.4 10.4 Z" fill="#fff" stroke="#000" stroke-width="1.1" stroke-linejoin="round"/><path d="M7.5 7.5 V11 M10.5 8 V11 M13.5 9 V11.5" stroke="#000" stroke-width="1" fill="none"/></svg>
<div id="sb" class="abs"><div class="th"></div>
<svg class="abs" style="left:0;top:0" width="17" height="17"><path d="M5 13 L8.5 9 L12 13 Z" fill="#a3a3a3"/></svg>
<svg class="abs" style="left:0;top:899px" width="17" height="17"><path d="M5 11 L12 11 L8.5 15 Z" fill="#505050"/></svg>
</div>
</body>
</html>
